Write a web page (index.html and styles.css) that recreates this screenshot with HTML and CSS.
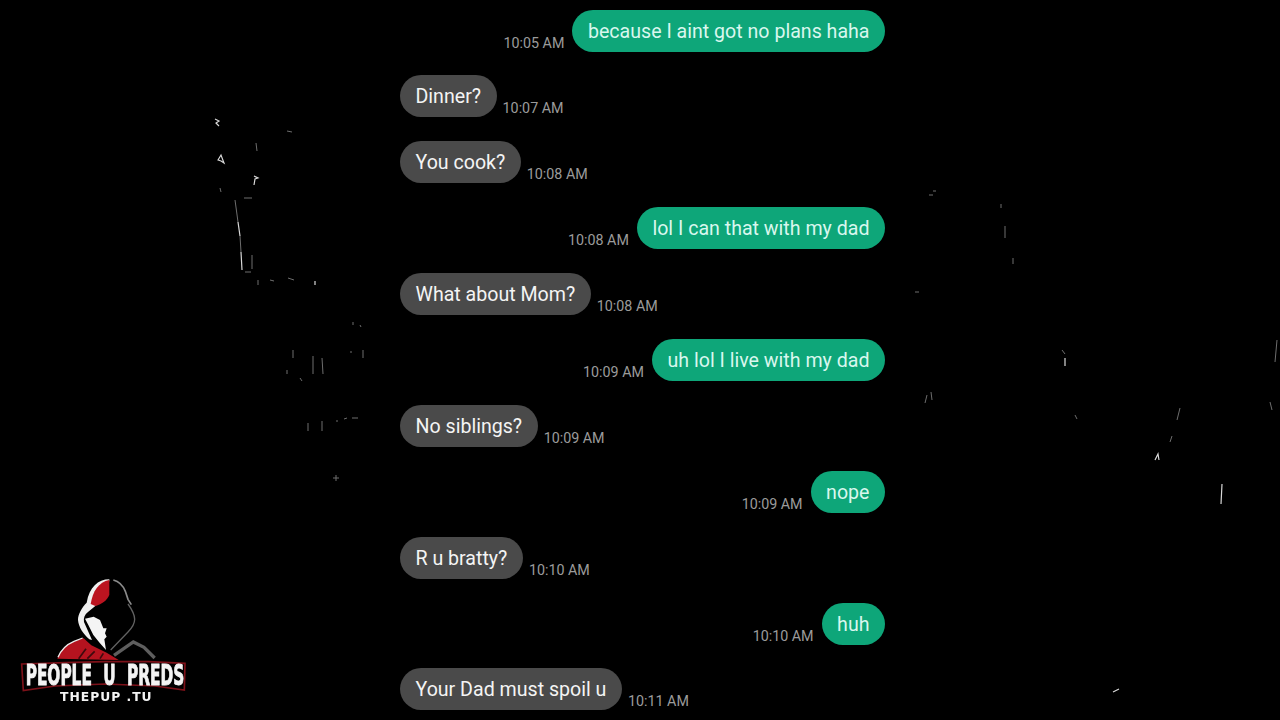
FILE: index.html
```html
<!DOCTYPE html>
<html lang="en">
  <head>
    <meta charset="UTF-8" />
    <title>Chat</title>
    <link rel="stylesheet" href="styles.css">
  </head>
  <body>
    <!-- video noise left on the black background -->
    <svg class="specks" width="1280" height="720" viewBox="0 0 1280 720">
      <g class="speck-bright">
        <path d="M215 119l4 2-3 2 3 3M218 160l3-5 3 8-3-2zM254 176l4 2-3 1-1 6M238 222l2 14M241 252l1 18M315 281v4M1222 484l-1 20M1155 460l3-6 1 6M1113 692l6-3M1065 358v8" />
      </g>
      <g class="speck-dim">
        <path d="M235 200l3 22M240 236l1 16M252 198h-8M251 272h-6M256 143l1 8M287 131l5 1M220 188l1 4M252 255v14M258 280v5M288 278l6 2M270 280l4 1M313 356v18M322 358l1 16M293 350v8M287 370v4M300 378l2 3M350 352h2M363 350v8M358 418h-6M347 418l-3 1M337 420v2M308 423v8M322 421v10M333 478h6M353 322v3M336 475v6M360 325l1 2" />
        <path d="M933 191h3M929 195h4M1001 204v4M1005 226v12M1013 258v6M915 292h4M1062 350l3 4M927 395l-2 8M931 392l1 8M1075 415l2 4M1172 436l-2 6M1270 402l2 8M1180 408l-3 12M1277 340l-2 22" />
      </g>
    </svg>

    <main class="chat">
      <div class="row sent"><span class="time">10:05 AM</span><p class="bubble">because I aint got no plans haha</p></div>
      <div class="row"><p class="bubble">Dinner?</p><span class="time">10:07 AM</span></div>
      <div class="row"><p class="bubble">You cook?</p><span class="time">10:08 AM</span></div>
      <div class="row sent"><span class="time">10:08 AM</span><p class="bubble">lol I can that with my dad</p></div>
      <div class="row"><p class="bubble">What about Mom?</p><span class="time">10:08 AM</span></div>
      <div class="row sent"><span class="time">10:09 AM</span><p class="bubble">uh lol I live with my dad</p></div>
      <div class="row"><p class="bubble">No siblings?</p><span class="time">10:09 AM</span></div>
      <div class="row sent"><span class="time">10:09 AM</span><p class="bubble">nope</p></div>
      <div class="row"><p class="bubble">R u bratty?</p><span class="time">10:10 AM</span></div>
      <div class="row sent"><span class="time">10:10 AM</span><p class="bubble">huh</p></div>
      <div class="row"><p class="bubble">Your Dad must spoil u</p><span class="time">10:11 AM</span></div>
    </main>

    <!-- channel logo -->
    <svg class="logo" width="210" height="160" viewBox="0 0 630 480">
      <!-- shoulders -->
      <path fill="#b5131f" d="M172 296c8-22 24-40 48-50l30-12 24 22 46 22 36 22z" />
      <path fill="none" stroke="#eee" stroke-width="4" d="M174 292c8-20 24-38 48-48l26-10" />
      <path fill="none" stroke="#3d0a0e" stroke-width="5" d="M236 296l22-30M262 296l22-22M300 296l10-16" />
      <path fill="none" stroke="#5e5e5e" stroke-width="10" d="M342 286l58-40 32 16 32 32" />
      <!-- hood -->
      <path fill="#000" d="M328 58c-30 2-54 22-66 70-18 18-28 36-26 54 2 22 16 40 32 54l62 42 68-58c14-14 20-30 12-48l-26-54c-8-36-30-60-56-60z" />
      <path fill="#f0f0f0" d="M328 58c-34 0-60 24-68 70-14 14-26 34-26 52 2 22 16 42 34 58l8 2-24-54c-2-12 2-22 12-30l32-26-8-6c2-30 16-50 40-60z" />
      <path fill="#bb1420" d="M328 60c-32 6-50 34-56 72l14 6c20-6 36-18 42-34z" />
      <path fill="none" stroke="#8a8a8a" stroke-width="5" d="M340 60c16 4 28 14 36 34l8 24 10 16" />
      <path fill="none" stroke="#626262" stroke-width="4" d="M384 132c10 14 20 34 20 46 0 14-8 26-20 38l-52 54" />
      <!-- face -->
      <path fill="#f4f4f4" d="M255 176l26-6 19 10 10 25 10 0-5 15 5 10-7 8 5 32-18-20-20-25-15-30z" />
      <!-- banner -->
      <path fill="#000" stroke="#7d1119" stroke-width="5" d="M65 312l130-4 120-3 130 0 110 5-2 80-88-12-150-6-150 6-95 14z" />
      <text class="logo-title" transform="translate(77 375) scale(1 1.8)">PEOPLE U PREDS</text>
      <text class="logo-site" x="180" y="422">THEPUP .TU</text>
    </svg>
  </body>
</html>
```

FILE: styles.css
```css
body {
  margin: 0;
  height: 720px;
  overflow: hidden;
  background: #000;
  font-family: Roboto, "Liberation Sans", sans-serif;
}

.specks {
  position: absolute;
  top: 0;
  left: 0;
}

.speck-bright path {
  fill: none;
  stroke: #d8d8d8;
  stroke-width: 1.2;
}

.speck-dim path {
  fill: none;
  stroke: #6e6e6e;
  stroke-width: 1;
}

/* message column */
.chat {
  position: relative;
  width: 485px;
  margin-left: 400px;
  padding-top: 9.5px;
  display: flex;
  flex-direction: column;
  gap: 23.9px;
}

.row {
  display: flex;
  align-items: flex-end;
  gap: 6px;
}

.row.sent {
  justify-content: flex-end;
  gap: 8px;
}

.bubble {
  margin: 0;
  height: 41px;
  padding: 1px 15.5px 0;
  border-radius: 21px;
  background: #4a4a4a;
  color: #f4f4f4;
  font-size: 19.6px;
  line-height: 42px;
  white-space: nowrap;
}

.sent .bubble {
  background: #0ea679;
  color: #d9f7ee;
}

.time {
  color: #9b9b9b;
  font-size: 14.3px;
  line-height: 17px;
  white-space: nowrap;
}

/* logo */
.logo {
  position: absolute;
  left: 0;
  top: 560px;
  filter: blur(0.4px);
}

.logo-title {
  fill: #f4f4f4;
  stroke: #f4f4f4;
  stroke-width: 1.5;
  font-family: "DejaVu Sans", sans-serif;
  font-weight: bold;
  font-size: 46px;
  word-spacing: 18px;
}

.logo-site {
  fill: #f4f4f4;
  font-family: "DejaVu Sans", sans-serif;
  font-weight: bold;
  font-size: 37px;
  letter-spacing: 3px;
}
```
